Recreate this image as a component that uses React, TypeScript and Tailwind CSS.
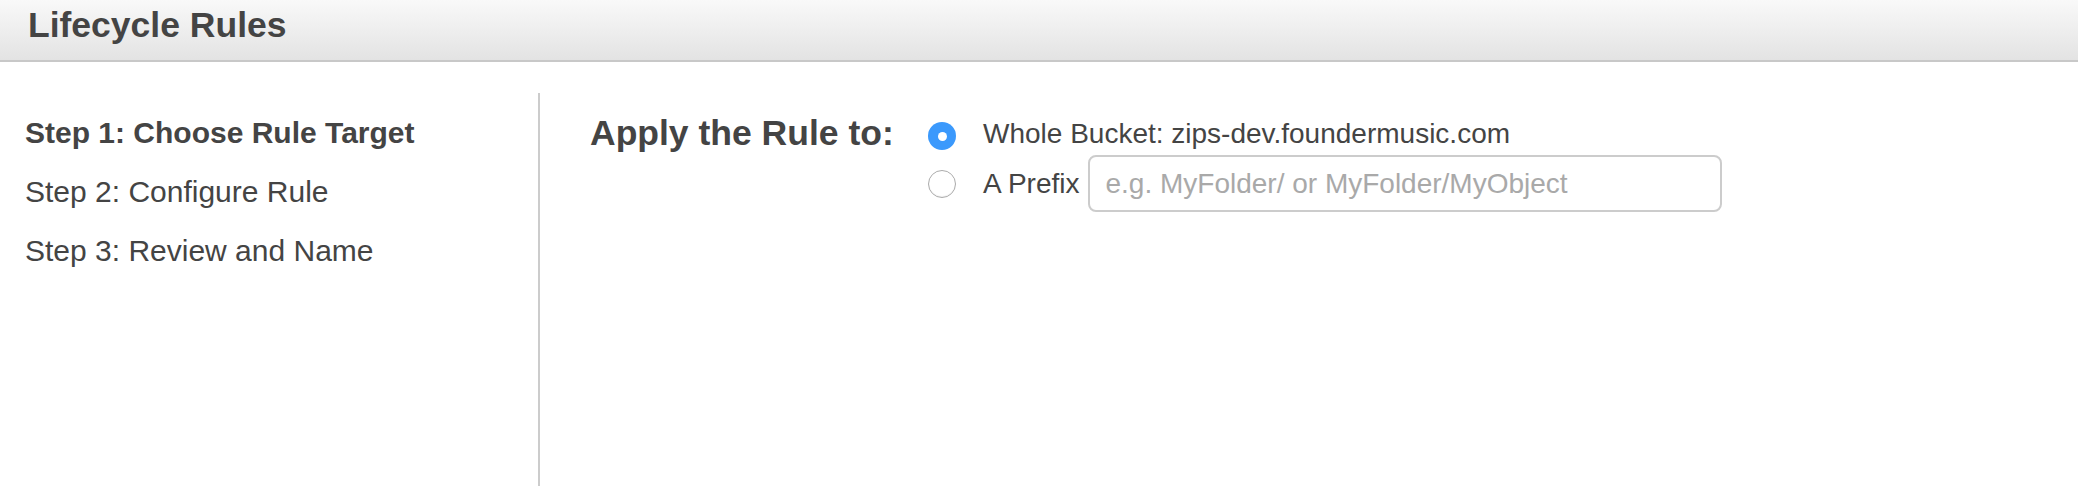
export default function App() {
  const steps = [
    { label: 'Step 1: Choose Rule Target', active: true },
    { label: 'Step 2: Configure Rule', active: false },
    { label: 'Step 3: Review and Name', active: false },
  ];

  return (
    <div className="h-[486px] overflow-hidden bg-white font-['Liberation_Sans',Arial,sans-serif] text-[#444]">
      {/* Header */}
      <header className="h-[62px] bg-linear-to-b from-[#f9f9f9] to-[#e3e3e3] border-b-2 border-[#c8c8c8] pl-[28px] pt-[5px]">
        <h1 className="text-[35.5px] leading-[40px] font-bold">Lifecycle Rules</h1>
      </header>

      <div className="flex mt-[31px] h-[393px]">
        {/* Steps */}
        <div className="w-[538px] pl-[25px] pt-[10px]">
          {steps.map((s) => (
            <div
              key={s.label}
              className={`text-[30px] leading-[59px] ${s.active ? 'font-bold' : ''}`}
            >
              {s.label}
            </div>
          ))}
        </div>

        {/* Divider + content */}
        <div className="flex-1 border-l-2 border-[#cccccc] pl-[50px] flex items-start">
          <h2 className="w-[338px] mt-[20px] text-[35.5px] leading-[40px] font-bold">Apply the Rule to:</h2>

          <div className="mt-[29px] flex flex-col gap-[5px]">
            <label className="flex items-start h-[28px]">
              <span className="w-[28px] h-[28px] rounded-full bg-[#3b99fc] flex items-center justify-center shrink-0">
                <span className="w-[9px] h-[9px] rounded-full bg-white" />
              </span>
              <span className="ml-[27px] text-[28px] leading-[24px] whitespace-nowrap">
                Whole Bucket: zips-dev.foundermusic.com
              </span>
            </label>

            <label className="flex items-center h-[57px]">
              <span className="w-[28px] h-[28px] rounded-full border-[1.5px] border-[#ababab] bg-white shadow-[inset_0_-1px_1px_rgba(0,0,0,0.06)] shrink-0" />
              <span className="ml-[27px] text-[28px] whitespace-nowrap">A Prefix</span>
              <input
                type="text"
                placeholder="e.g. MyFolder/ or MyFolder/MyObject"
                className="ml-[9px] w-[634px] h-[57px] rounded-[8px] border-2 border-[#cccccc] bg-white px-[15px] text-[28px] placeholder:text-[#a9a9a9] outline-none"
              />
            </label>
          </div>
        </div>
      </div>
    </div>
  );
}
